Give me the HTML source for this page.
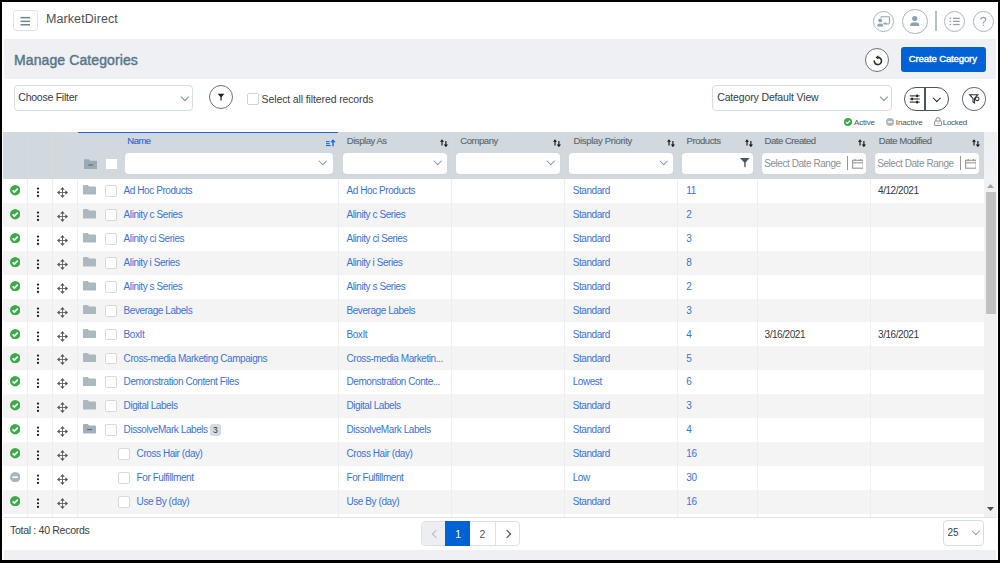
<!DOCTYPE html>
<html><head><meta charset="utf-8">
<style>
*{box-sizing:border-box;margin:0;padding:0}
html,body{width:1000px;height:563px;overflow:hidden;background:#000}
body{font-family:"Liberation Sans",sans-serif;position:relative}
.abs,.tx,.chev{position:absolute}
.tx{line-height:1;white-space:nowrap}
#frame{position:absolute;left:2px;top:2px;width:995.5px;height:557.5px;background:#fff;overflow:hidden}
#pg{position:absolute;left:-2px;top:-2px;width:1000px;height:563px}
.chev{border-style:solid}
.nicon{position:absolute;border:1.25px solid #a6b6bf;border-radius:50%;background:#fff}
.circ{position:absolute;border:1.3px solid #68737a;border-radius:50%;background:#fff}
.sel{position:absolute;border:1px solid #d5dee4;border-radius:4px;background:#fff}
.cbx{position:absolute;width:12px;height:12px;border:1px solid #cdd3d7;border-radius:2px;background:#fff}
.hsep{position:absolute;top:131.5px;width:1px;height:47.5px;background:#d7dadb}
.hin{position:absolute;top:153px;height:20.8px;background:#fff;border-radius:4px}
#tbody{position:absolute;left:3px;top:179px;width:981px;height:338px;background:#fff;overflow:hidden}
.row{position:absolute;left:0;width:981px;height:23.9px;background:#fff}
.row.alt{background:#f4f4f4}
.row > *{position:absolute}
.st{left:6.8px;top:6.3px}
.keb{left:32.8px;top:8.2px}
.mv{left:54.35px;top:8.2px}
.fd{left:80px;top:6.4px}
.cb{top:6.3px;width:11.8px;height:11.8px;border:1px solid #d7dadd;border-radius:2px;background:#fff}
.badge{top:5.8px;width:10.2px;height:12px;background:#d3dbe0;color:#333;border-radius:2.5px;font-size:8.5px;line-height:13.4px;text-align:center}
.vline{position:absolute;top:179px;width:1px;height:338px;background:#ebeef3}
</style></head><body>
<div id="frame"><div id="pg">
<!-- NAV -->
<div class="abs" style="left:13px;top:10px;width:24.5px;height:21px;border:1.1px solid #dde3e8;border-radius:3.5px;background:#fff"></div>
<svg class="abs" style="left:13px;top:10px" width="25" height="21" viewBox="0 0 25 21"><g fill="#6d8595"><rect x="7.5" y="6.9" width="9.5" height="1.5"/><rect x="7.5" y="10.6" width="9.5" height="1.5"/><rect x="7.5" y="14" width="9.5" height="1.5"/></g></svg>
<div class="tx" style="left:46px;top:13.42px;font-size:12.5px;color:#4a5056;letter-spacing:0.08px;font-weight:400;">MarketDirect</div>

<div class="nicon" style="left:873.3px;top:11.2px;width:20.8px;height:20.8px"></div>
<div class="nicon" style="left:902px;top:8.7px;width:25.6px;height:25.6px"></div>
<div class="abs" style="left:935.4px;top:11.2px;width:1.2px;height:20.3px;background:#b3c1c9"></div>
<div class="nicon" style="left:944px;top:11.2px;width:20.8px;height:20.8px"></div>
<div class="nicon" style="left:973.2px;top:11.2px;width:20.8px;height:20.8px"></div>
<svg class="abs" style="left:873.3px;top:11.2px" width="21" height="21" viewBox="0 0 21 21">
 <rect x="7.9" y="5.75" width="8.6" height="7.2" rx="0.9" fill="none" stroke="#8ea2af" stroke-width="1.15"/>
 <path d="M10.2 13.1 L12.4 10.9 L14.4 13.1Z" fill="#8ea2af"/>
 <circle cx="7.2" cy="9.4" r="2.9" fill="#fff"/>
 <path d="M3.6 16.6 V14 Q3.6 11.8 7.2 11.8 Q10.8 11.8 10.8 14 V16.6Z" fill="#fff"/>
 <circle cx="7.2" cy="9.4" r="1.85" fill="#8ea2af"/>
 <path d="M4.2 15.4 V14.4 Q4.2 12.4 7.2 12.4 Q10.2 12.4 10.2 14.4 V15.4Z" fill="#8ea2af"/>
</svg>
<svg class="abs" style="left:902px;top:8.7px" width="25.6" height="25.6" viewBox="0 0 25.6 25.6">
 <circle cx="12.7" cy="9.6" r="2.6" fill="#8ea2af"/>
 <path d="M8.2 17.1 V15.8 Q8.2 13.2 12.7 13.2 Q17.2 13.2 17.2 15.8 V17.1Z" fill="#8ea2af"/>
</svg>
<svg class="abs" style="left:944px;top:11.2px" width="21" height="21" viewBox="0 0 21 21">
 <g fill="#8ea2af"><rect x="5.6" y="6.6" width="1.5" height="1.5"/><rect x="5.6" y="9.6" width="1.5" height="1.5"/><rect x="5.6" y="12.8" width="1.5" height="1.5"/>
 <rect x="8.9" y="6.7" width="6.8" height="1.3"/><rect x="8.9" y="9.7" width="6.8" height="1.3"/><rect x="8.9" y="12.9" width="6.8" height="1.3"/></g>
</svg>
<svg class="abs" style="left:973.2px;top:11.2px" width="21" height="21" viewBox="0 0 21 21">
 <path d="M7.9 8.6 Q7.9 6.4 10.3 6.4 Q12.7 6.4 12.7 8.5 Q12.7 9.8 11.3 10.6 Q10.3 11.2 10.3 12.6" fill="none" stroke="#8ea2af" stroke-width="1.15"/>
 <circle cx="10.3" cy="14.3" r="0.8" fill="#8ea2af"/>
</svg>

<!-- TITLE BAR -->
<div class="abs" style="left:4px;top:39px;width:992px;height:40px;background:#eef0f4"></div>
<div class="tx" style="left:14px;top:53.05px;font-size:14px;color:#587789;letter-spacing:0.1px;font-weight:400;-webkit-text-stroke:0.45px #587789">Manage Categories</div>
<div class="circ" style="left:864.5px;top:47.5px;width:24px;height:24px"></div>
<svg class="abs" style="left:864.5px;top:47.5px" width="24" height="24" viewBox="0 0 24 24">
 <path d="M12.9 9.4 A3.6 3.6 0 1 1 9.355 12.375" fill="none" stroke="#2c2c2c" stroke-width="1.6"/>
 <path d="M10.5 9.4 L13.3 7.3 L13.3 11.5Z" fill="#2c2c2c"/>
</svg>
<div class="abs" style="left:901px;top:47px;width:85px;height:25.3px;background:#0062d4;border-radius:3px"></div>
<div class="tx" style="left:908.8px;top:54.37px;font-size:9.6px;color:#fff;letter-spacing:-0.16px;font-weight:400;-webkit-text-stroke:0.35px #fff">Create Category</div>

<!-- FILTER ROW -->
<div class="sel" style="left:14px;top:85px;width:179px;height:25.5px"></div>
<div class="tx" style="left:18.3px;top:92.41px;font-size:10.5px;color:#353a3f;letter-spacing:-0.25px;font-weight:400;">Choose Filter</div>
<div class="chev" style="left:181.5px;top:94px;width:5.8px;height:5.8px;border-color:#7891a3;border-width:0 1.15px 1.15px 0;transform:rotate(45deg)"></div>
<div class="circ" style="left:208.5px;top:85px;width:24.2px;height:24.2px"></div>
<svg class="abs" style="left:208.5px;top:85px" width="24" height="24" viewBox="0 0 24 24"><path d="M8.7 8.8 H15.4 L12.65 11.9 V15.6 H11.45 V11.9Z" fill="#1e1e1e"/></svg>
<div class="cbx" style="left:247px;top:93.2px"></div>
<div class="tx" style="left:261.6px;top:93.71px;font-size:10.5px;color:#3b4045;letter-spacing:-0.12px;font-weight:400;">Select all filtered records</div>

<div class="sel" style="left:712px;top:85px;width:180px;height:25.5px"></div>
<div class="tx" style="left:717.2px;top:92.31px;font-size:10.5px;color:#353a3f;letter-spacing:-0.14px;font-weight:400;">Category Default View</div>
<div class="chev" style="left:880.5px;top:94px;width:5.8px;height:5.8px;border-color:#7891a3;border-width:0 1.15px 1.15px 0;transform:rotate(45deg)"></div>
<div class="abs" style="left:904px;top:86.8px;width:45px;height:24px;border:1.2px solid #4a565d;border-radius:12px;background:#fff"></div>
<div class="abs" style="left:924.3px;top:87px;width:1.6px;height:23.6px;background:#4a565d"></div>
<svg class="abs" style="left:904px;top:86.8px" width="21" height="24" viewBox="0 0 21 24">
 <g stroke="#1e1e1e" stroke-width="1"><path d="M5.8 8.9 H15.7 M5.8 12 H15.7 M5.8 15.1 H15.7"/></g>
 <g fill="#1e1e1e"><rect x="12.2" y="7.6" width="1.8" height="2.6"/><rect x="7.2" y="10.7" width="1.8" height="2.6"/><rect x="12.2" y="13.8" width="1.8" height="2.6"/></g>
</svg>
<div class="chev" style="left:934.2px;top:94.6px;width:5.6px;height:5.6px;border-color:#1e1e1e;border-width:0 1.3px 1.3px 0;transform:rotate(45deg)"></div>
<div class="circ" style="left:961.5px;top:86.8px;width:24.2px;height:24px"></div>
<svg class="abs" style="left:961.5px;top:86.8px" width="24" height="24" viewBox="0 0 24 24"><path d="M7.7 7.7 H15.8 L12.5 11.5 V16 L11 15 V11.5Z" fill="none" stroke="#25343b" stroke-width="1.1"/><circle cx="15.2" cy="11.8" r="1.8" fill="#fff" stroke="#25343b" stroke-width="1.1"/></svg>

<!-- LEGEND -->
<svg class="abs" style="left:844px;top:118px" width="8" height="8" viewBox="0 0 10 10"><circle cx="5" cy="5" r="5" fill="#3cac4a"/><path d="M2.5 5.2 L4.2 6.8 L7.5 3.5" stroke="#fff" stroke-width="1.6" fill="none"/></svg>
<div class="tx" style="left:854.1px;top:118.63px;font-size:8px;color:#4d5358;letter-spacing:-0.2px;font-weight:400;">Active</div>
<svg class="abs" style="left:886.3px;top:118px" width="8" height="8" viewBox="0 0 10 10"><circle cx="5" cy="5" r="5" fill="#a9b6be"/><rect x="2.2" y="4.1" width="5.6" height="1.8" fill="#fff"/></svg>
<div class="tx" style="left:895.8px;top:118.63px;font-size:8px;color:#4d5358;letter-spacing:-0.1px;font-weight:400;">Inactive</div>
<svg class="abs" style="left:933.7px;top:117.3px" width="8" height="9" viewBox="0 0 8 9"><rect x="0.6" y="4" width="6.8" height="4.5" rx="0.5" fill="none" stroke="#7d848a" stroke-width="0.9"/><path d="M1.9 4 V2.7 A2.1 2.1 0 0 1 6.1 2.7 V4" fill="none" stroke="#7d848a" stroke-width="0.9"/><rect x="3.6" y="5.5" width="0.8" height="1.6" fill="#7d848a"/></svg>
<div class="tx" style="left:942.8px;top:118.63px;font-size:8px;color:#4d5358;letter-spacing:-0.3px;font-weight:400;">Locked</div>

<!-- TABLE HEADER -->
<div class="abs" style="left:3px;top:131.5px;width:981px;height:47.5px;background:#d1d9de"></div>
<div class="abs" style="left:78px;top:131.5px;width:261px;height:1.8px;background:#1f66d6"></div>
<div class="hsep" style="left:27px"></div><div class="hsep" style="left:52px"></div><div class="hsep" style="left:77px"></div><div class="hsep" style="left:338px"></div><div class="hsep" style="left:451px"></div><div class="hsep" style="left:564px"></div><div class="hsep" style="left:677px"></div><div class="hsep" style="left:757px"></div><div class="hsep" style="left:870px"></div>
<svg class="abs" style="left:84px;top:158.6px" width="13.4" height="10.4" viewBox="0 0 13 9.6"><path d="M0 1 Q0 0 1 0 H4.8 L6.1 1.4 H12 Q13 1.4 13 2.4 V8.8 Q13 9.6 12.2 9.6 H0.8 Q0 9.6 0 8.8Z" fill="#9cabb3"/><rect x="4" y="5" width="5" height="1.2" fill="#627580"/></svg>
<div class="abs" style="left:106px;top:158.5px;width:10.5px;height:10.5px;background:#fff"></div>
<div class="tx" style="left:127.3px;top:136.16px;font-size:9.5px;color:#2e67d3;letter-spacing:-0.5px;font-weight:400;-webkit-text-stroke:0.15px #2e67d3">Name</div>
<svg class="abs" style="left:325.5px;top:139px" width="10" height="8" viewBox="0 0 10 8"><g fill="#1f66d6"><rect x="0" y="2.1" width="3.6" height="1.1"/><rect x="0" y="4.1" width="3.6" height="1.1"/><rect x="0" y="6" width="4.6" height="1.1"/><path d="M7 0.3 L9.7 3.3 H7.7 V7.2 H6.3 V3.3 H4.3Z"/></g></svg>
<div class="hin" style="left:125px;width:208.3px"></div><div class="chev" style="left:320.3px;top:157.6px;width:5.5px;height:5.5px;border-color:#7891a3;border-width:0 1.1px 1.1px 0;transform:rotate(45deg)"></div>
<div class="tx" style="left:346.8px;top:136.16px;font-size:9.5px;color:#5d6971;letter-spacing:-0.45px;font-weight:400;-webkit-text-stroke:0.15px #5d6971">Display As</div>
<div class="hin" style="left:342.5px;width:104.6px"></div><div class="chev" style="left:434.5px;top:157.6px;width:5.5px;height:5.5px;border-color:#7891a3;border-width:0 1.1px 1.1px 0;transform:rotate(45deg)"></div>
<div class="tx" style="left:460.3px;top:136.16px;font-size:9.5px;color:#5d6971;letter-spacing:-0.45px;font-weight:400;-webkit-text-stroke:0.15px #5d6971">Company</div>
<div class="hin" style="left:456px;width:104px"></div><div class="chev" style="left:547.5px;top:157.6px;width:5.5px;height:5.5px;border-color:#7891a3;border-width:0 1.1px 1.1px 0;transform:rotate(45deg)"></div>
<div class="tx" style="left:573.4px;top:136.16px;font-size:9.5px;color:#5d6971;letter-spacing:-0.3px;font-weight:400;-webkit-text-stroke:0.15px #5d6971">Display Priority</div>
<div class="hin" style="left:569px;width:104.4px"></div><div class="chev" style="left:661px;top:157.6px;width:5.5px;height:5.5px;border-color:#7891a3;border-width:0 1.1px 1.1px 0;transform:rotate(45deg)"></div>
<div class="tx" style="left:686.6px;top:136.16px;font-size:9.5px;color:#5d6971;letter-spacing:-0.45px;font-weight:400;-webkit-text-stroke:0.15px #5d6971">Products</div>
<div class="hin" style="left:682px;width:71px"></div>
<svg class="abs" style="left:740px;top:157.9px" width="9.6" height="9.8" viewBox="0 0 9.6 9.8"><path d="M0 0 H9.6 L5.6 4.6 V9.8 L4.2 8.6 V4.6Z" fill="#465861"/></svg>
<div class="tx" style="left:764.5px;top:136.16px;font-size:9.5px;color:#5d6971;letter-spacing:-0.45px;font-weight:400;-webkit-text-stroke:0.15px #5d6971">Date Created</div>
<div class="tx" style="left:878.8px;top:136.16px;font-size:9.5px;color:#5d6971;letter-spacing:-0.45px;font-weight:400;-webkit-text-stroke:0.15px #5d6971">Date Modified</div>
<div class="hin" style="left:762px;width:104.4px"></div><div class="tx" style="left:764.2px;top:158.94px;font-size:10px;color:#8c9196;letter-spacing:-0.44px;font-weight:400;">Select Date Range</div><div class="abs" style="left:846.9px;top:156.3px;width:1.1px;height:14px;background:#929699"></div><svg class="abs" style="left:851.6px;top:159px" width="11.8" height="9.8" viewBox="0 0 11.8 9.8"><rect x="0.6" y="1.3" width="10.6" height="7.9" fill="none" stroke="#9a9a98" stroke-width="1.15"/><path d="M0.6 3.8 H11.2" stroke="#9a9a98" stroke-width="1.1"/><rect x="2.6" y="0" width="1.2" height="2.2" fill="#9a9a98"/><rect x="8" y="0" width="1.2" height="2.2" fill="#9a9a98"/></svg><div class="hin" style="left:875px;width:104.4px"></div><div class="tx" style="left:877.2px;top:158.94px;font-size:10px;color:#8c9196;letter-spacing:-0.44px;font-weight:400;">Select Date Range</div><div class="abs" style="left:959.9px;top:156.3px;width:1.1px;height:14px;background:#929699"></div><svg class="abs" style="left:964.6px;top:159px" width="11.8" height="9.8" viewBox="0 0 11.8 9.8"><rect x="0.6" y="1.3" width="10.6" height="7.9" fill="none" stroke="#9a9a98" stroke-width="1.15"/><path d="M0.6 3.8 H11.2" stroke="#9a9a98" stroke-width="1.1"/><rect x="2.6" y="0" width="1.2" height="2.2" fill="#9a9a98"/><rect x="8" y="0" width="1.2" height="2.2" fill="#9a9a98"/></svg><svg class="abs" style="left:439.8px;top:138.5px" width="8.2" height="8.4" viewBox="0 0 8.2 8.4"><path d="M0 2.8 L2.0 0.2 L4.0 2.8Z M3.8 5.6 L5.9 8.2 L8.0 5.6Z" fill="#161616"/><path d="M2.0 2 V6.4 M5.9 1.9 V6.2" stroke="#161616" stroke-width="1.15"/></svg><svg class="abs" style="left:553.3px;top:138.5px" width="8.2" height="8.4" viewBox="0 0 8.2 8.4"><path d="M0 2.8 L2.0 0.2 L4.0 2.8Z M3.8 5.6 L5.9 8.2 L8.0 5.6Z" fill="#161616"/><path d="M2.0 2 V6.4 M5.9 1.9 V6.2" stroke="#161616" stroke-width="1.15"/></svg><svg class="abs" style="left:666.8px;top:138.5px" width="8.2" height="8.4" viewBox="0 0 8.2 8.4"><path d="M0 2.8 L2.0 0.2 L4.0 2.8Z M3.8 5.6 L5.9 8.2 L8.0 5.6Z" fill="#161616"/><path d="M2.0 2 V6.4 M5.9 1.9 V6.2" stroke="#161616" stroke-width="1.15"/></svg><svg class="abs" style="left:745.3px;top:138.5px" width="8.2" height="8.4" viewBox="0 0 8.2 8.4"><path d="M0 2.8 L2.0 0.2 L4.0 2.8Z M3.8 5.6 L5.9 8.2 L8.0 5.6Z" fill="#161616"/><path d="M2.0 2 V6.4 M5.9 1.9 V6.2" stroke="#161616" stroke-width="1.15"/></svg><svg class="abs" style="left:858.2px;top:138.5px" width="8.2" height="8.4" viewBox="0 0 8.2 8.4"><path d="M0 2.8 L2.0 0.2 L4.0 2.8Z M3.8 5.6 L5.9 8.2 L8.0 5.6Z" fill="#161616"/><path d="M2.0 2 V6.4 M5.9 1.9 V6.2" stroke="#161616" stroke-width="1.15"/></svg><svg class="abs" style="left:972px;top:138.5px" width="8.2" height="8.4" viewBox="0 0 8.2 8.4"><path d="M0 2.8 L2.0 0.2 L4.0 2.8Z M3.8 5.6 L5.9 8.2 L8.0 5.6Z" fill="#161616"/><path d="M2.0 2 V6.4 M5.9 1.9 V6.2" stroke="#161616" stroke-width="1.15"/></svg>
<div id="tbody">
<div class="row" style="top:0.00px"><svg class="st" width="10.4" height="10.4" viewBox="0 0 10 10"><circle cx="5" cy="5" r="5" fill="#3cac4a"/><path d="M2.5 5.2 L4.2 6.8 L7.5 3.5" stroke="#fff" stroke-width="1.5" fill="none"/></svg><svg class="keb" width="4" height="11" viewBox="0 0 4 11"><circle cx="2" cy="1.6" r="1.12" fill="#1a1a1a"/><circle cx="2" cy="5.25" r="1.12" fill="#1a1a1a"/><circle cx="2" cy="8.9" r="1.12" fill="#1a1a1a"/></svg><svg class="mv" width="11" height="11" viewBox="0 0 11 11"><path d="M5.5 2 V9 M2 5.5 H9" stroke="#6e6e6e" stroke-width="1"/><path d="M5.5 0 L3.3 2.7 H7.7Z M5.5 11 L3.3 8.3 H7.7Z M0 5.5 L2.7 3.3 V7.7Z M11 5.5 L8.3 3.3 V7.7Z" fill="#555"/></svg><svg class="fd" width="13" height="9.6" viewBox="0 0 13 9.6"><path d="M0 1 Q0 0 1 0 H4.8 L6.1 1.4 H12 Q13 1.4 13 2.4 V8.8 Q13 9.6 12.2 9.6 H0.8 Q0 9.6 0 8.8Z" fill="#abb8c0"/></svg><div class="cb" style="left:102px"></div><div class="tx" style="left:120.6px;top:7.23px;font-size:10px;color:#3a73da;letter-spacing:-0.43px;font-weight:400;">Ad Hoc Products</div><div class="tx" style="left:343.5px;top:7.23px;font-size:10px;color:#3a73da;letter-spacing:-0.43px;font-weight:400;">Ad Hoc Products</div><div class="tx" style="left:569.7px;top:7.23px;font-size:10px;color:#3a73da;letter-spacing:-0.43px;font-weight:400;">Standard</div><div class="tx" style="left:683.3px;top:7.23px;font-size:10px;color:#3a73da;letter-spacing:-0.43px;font-weight:400;">11</div><div class="tx" style="left:875px;top:7.23px;font-size:10px;color:#363b40;letter-spacing:-0.43px;font-weight:400;">4/12/2021</div></div>
<div class="row alt" style="top:23.90px"><svg class="st" width="10.4" height="10.4" viewBox="0 0 10 10"><circle cx="5" cy="5" r="5" fill="#3cac4a"/><path d="M2.5 5.2 L4.2 6.8 L7.5 3.5" stroke="#fff" stroke-width="1.5" fill="none"/></svg><svg class="keb" width="4" height="11" viewBox="0 0 4 11"><circle cx="2" cy="1.6" r="1.12" fill="#1a1a1a"/><circle cx="2" cy="5.25" r="1.12" fill="#1a1a1a"/><circle cx="2" cy="8.9" r="1.12" fill="#1a1a1a"/></svg><svg class="mv" width="11" height="11" viewBox="0 0 11 11"><path d="M5.5 2 V9 M2 5.5 H9" stroke="#6e6e6e" stroke-width="1"/><path d="M5.5 0 L3.3 2.7 H7.7Z M5.5 11 L3.3 8.3 H7.7Z M0 5.5 L2.7 3.3 V7.7Z M11 5.5 L8.3 3.3 V7.7Z" fill="#555"/></svg><svg class="fd" width="13" height="9.6" viewBox="0 0 13 9.6"><path d="M0 1 Q0 0 1 0 H4.8 L6.1 1.4 H12 Q13 1.4 13 2.4 V8.8 Q13 9.6 12.2 9.6 H0.8 Q0 9.6 0 8.8Z" fill="#abb8c0"/></svg><div class="cb" style="left:102px"></div><div class="tx" style="left:120.6px;top:7.23px;font-size:10px;color:#3a73da;letter-spacing:-0.43px;font-weight:400;">Alinity c Series</div><div class="tx" style="left:343.5px;top:7.23px;font-size:10px;color:#3a73da;letter-spacing:-0.43px;font-weight:400;">Alinity c Series</div><div class="tx" style="left:569.7px;top:7.23px;font-size:10px;color:#3a73da;letter-spacing:-0.43px;font-weight:400;">Standard</div><div class="tx" style="left:683.3px;top:7.23px;font-size:10px;color:#3a73da;letter-spacing:-0.43px;font-weight:400;">2</div></div>
<div class="row" style="top:47.80px"><svg class="st" width="10.4" height="10.4" viewBox="0 0 10 10"><circle cx="5" cy="5" r="5" fill="#3cac4a"/><path d="M2.5 5.2 L4.2 6.8 L7.5 3.5" stroke="#fff" stroke-width="1.5" fill="none"/></svg><svg class="keb" width="4" height="11" viewBox="0 0 4 11"><circle cx="2" cy="1.6" r="1.12" fill="#1a1a1a"/><circle cx="2" cy="5.25" r="1.12" fill="#1a1a1a"/><circle cx="2" cy="8.9" r="1.12" fill="#1a1a1a"/></svg><svg class="mv" width="11" height="11" viewBox="0 0 11 11"><path d="M5.5 2 V9 M2 5.5 H9" stroke="#6e6e6e" stroke-width="1"/><path d="M5.5 0 L3.3 2.7 H7.7Z M5.5 11 L3.3 8.3 H7.7Z M0 5.5 L2.7 3.3 V7.7Z M11 5.5 L8.3 3.3 V7.7Z" fill="#555"/></svg><svg class="fd" width="13" height="9.6" viewBox="0 0 13 9.6"><path d="M0 1 Q0 0 1 0 H4.8 L6.1 1.4 H12 Q13 1.4 13 2.4 V8.8 Q13 9.6 12.2 9.6 H0.8 Q0 9.6 0 8.8Z" fill="#abb8c0"/></svg><div class="cb" style="left:102px"></div><div class="tx" style="left:120.6px;top:7.23px;font-size:10px;color:#3a73da;letter-spacing:-0.43px;font-weight:400;">Alinity ci Series</div><div class="tx" style="left:343.5px;top:7.23px;font-size:10px;color:#3a73da;letter-spacing:-0.43px;font-weight:400;">Alinity ci Series</div><div class="tx" style="left:569.7px;top:7.23px;font-size:10px;color:#3a73da;letter-spacing:-0.43px;font-weight:400;">Standard</div><div class="tx" style="left:683.3px;top:7.23px;font-size:10px;color:#3a73da;letter-spacing:-0.43px;font-weight:400;">3</div></div>
<div class="row alt" style="top:71.70px"><svg class="st" width="10.4" height="10.4" viewBox="0 0 10 10"><circle cx="5" cy="5" r="5" fill="#3cac4a"/><path d="M2.5 5.2 L4.2 6.8 L7.5 3.5" stroke="#fff" stroke-width="1.5" fill="none"/></svg><svg class="keb" width="4" height="11" viewBox="0 0 4 11"><circle cx="2" cy="1.6" r="1.12" fill="#1a1a1a"/><circle cx="2" cy="5.25" r="1.12" fill="#1a1a1a"/><circle cx="2" cy="8.9" r="1.12" fill="#1a1a1a"/></svg><svg class="mv" width="11" height="11" viewBox="0 0 11 11"><path d="M5.5 2 V9 M2 5.5 H9" stroke="#6e6e6e" stroke-width="1"/><path d="M5.5 0 L3.3 2.7 H7.7Z M5.5 11 L3.3 8.3 H7.7Z M0 5.5 L2.7 3.3 V7.7Z M11 5.5 L8.3 3.3 V7.7Z" fill="#555"/></svg><svg class="fd" width="13" height="9.6" viewBox="0 0 13 9.6"><path d="M0 1 Q0 0 1 0 H4.8 L6.1 1.4 H12 Q13 1.4 13 2.4 V8.8 Q13 9.6 12.2 9.6 H0.8 Q0 9.6 0 8.8Z" fill="#abb8c0"/></svg><div class="cb" style="left:102px"></div><div class="tx" style="left:120.6px;top:7.23px;font-size:10px;color:#3a73da;letter-spacing:-0.43px;font-weight:400;">Alinity i Series</div><div class="tx" style="left:343.5px;top:7.23px;font-size:10px;color:#3a73da;letter-spacing:-0.43px;font-weight:400;">Alinity i Series</div><div class="tx" style="left:569.7px;top:7.23px;font-size:10px;color:#3a73da;letter-spacing:-0.43px;font-weight:400;">Standard</div><div class="tx" style="left:683.3px;top:7.23px;font-size:10px;color:#3a73da;letter-spacing:-0.43px;font-weight:400;">8</div></div>
<div class="row" style="top:95.60px"><svg class="st" width="10.4" height="10.4" viewBox="0 0 10 10"><circle cx="5" cy="5" r="5" fill="#3cac4a"/><path d="M2.5 5.2 L4.2 6.8 L7.5 3.5" stroke="#fff" stroke-width="1.5" fill="none"/></svg><svg class="keb" width="4" height="11" viewBox="0 0 4 11"><circle cx="2" cy="1.6" r="1.12" fill="#1a1a1a"/><circle cx="2" cy="5.25" r="1.12" fill="#1a1a1a"/><circle cx="2" cy="8.9" r="1.12" fill="#1a1a1a"/></svg><svg class="mv" width="11" height="11" viewBox="0 0 11 11"><path d="M5.5 2 V9 M2 5.5 H9" stroke="#6e6e6e" stroke-width="1"/><path d="M5.5 0 L3.3 2.7 H7.7Z M5.5 11 L3.3 8.3 H7.7Z M0 5.5 L2.7 3.3 V7.7Z M11 5.5 L8.3 3.3 V7.7Z" fill="#555"/></svg><svg class="fd" width="13" height="9.6" viewBox="0 0 13 9.6"><path d="M0 1 Q0 0 1 0 H4.8 L6.1 1.4 H12 Q13 1.4 13 2.4 V8.8 Q13 9.6 12.2 9.6 H0.8 Q0 9.6 0 8.8Z" fill="#abb8c0"/></svg><div class="cb" style="left:102px"></div><div class="tx" style="left:120.6px;top:7.23px;font-size:10px;color:#3a73da;letter-spacing:-0.43px;font-weight:400;">Alinity s Series</div><div class="tx" style="left:343.5px;top:7.23px;font-size:10px;color:#3a73da;letter-spacing:-0.43px;font-weight:400;">Alinity s Series</div><div class="tx" style="left:569.7px;top:7.23px;font-size:10px;color:#3a73da;letter-spacing:-0.43px;font-weight:400;">Standard</div><div class="tx" style="left:683.3px;top:7.23px;font-size:10px;color:#3a73da;letter-spacing:-0.43px;font-weight:400;">2</div></div>
<div class="row alt" style="top:119.50px"><svg class="st" width="10.4" height="10.4" viewBox="0 0 10 10"><circle cx="5" cy="5" r="5" fill="#3cac4a"/><path d="M2.5 5.2 L4.2 6.8 L7.5 3.5" stroke="#fff" stroke-width="1.5" fill="none"/></svg><svg class="keb" width="4" height="11" viewBox="0 0 4 11"><circle cx="2" cy="1.6" r="1.12" fill="#1a1a1a"/><circle cx="2" cy="5.25" r="1.12" fill="#1a1a1a"/><circle cx="2" cy="8.9" r="1.12" fill="#1a1a1a"/></svg><svg class="mv" width="11" height="11" viewBox="0 0 11 11"><path d="M5.5 2 V9 M2 5.5 H9" stroke="#6e6e6e" stroke-width="1"/><path d="M5.5 0 L3.3 2.7 H7.7Z M5.5 11 L3.3 8.3 H7.7Z M0 5.5 L2.7 3.3 V7.7Z M11 5.5 L8.3 3.3 V7.7Z" fill="#555"/></svg><svg class="fd" width="13" height="9.6" viewBox="0 0 13 9.6"><path d="M0 1 Q0 0 1 0 H4.8 L6.1 1.4 H12 Q13 1.4 13 2.4 V8.8 Q13 9.6 12.2 9.6 H0.8 Q0 9.6 0 8.8Z" fill="#abb8c0"/></svg><div class="cb" style="left:102px"></div><div class="tx" style="left:120.6px;top:7.23px;font-size:10px;color:#3a73da;letter-spacing:-0.43px;font-weight:400;">Beverage Labels</div><div class="tx" style="left:343.5px;top:7.23px;font-size:10px;color:#3a73da;letter-spacing:-0.43px;font-weight:400;">Beverage Labels</div><div class="tx" style="left:569.7px;top:7.23px;font-size:10px;color:#3a73da;letter-spacing:-0.43px;font-weight:400;">Standard</div><div class="tx" style="left:683.3px;top:7.23px;font-size:10px;color:#3a73da;letter-spacing:-0.43px;font-weight:400;">3</div></div>
<div class="row" style="top:143.40px"><svg class="st" width="10.4" height="10.4" viewBox="0 0 10 10"><circle cx="5" cy="5" r="5" fill="#3cac4a"/><path d="M2.5 5.2 L4.2 6.8 L7.5 3.5" stroke="#fff" stroke-width="1.5" fill="none"/></svg><svg class="keb" width="4" height="11" viewBox="0 0 4 11"><circle cx="2" cy="1.6" r="1.12" fill="#1a1a1a"/><circle cx="2" cy="5.25" r="1.12" fill="#1a1a1a"/><circle cx="2" cy="8.9" r="1.12" fill="#1a1a1a"/></svg><svg class="mv" width="11" height="11" viewBox="0 0 11 11"><path d="M5.5 2 V9 M2 5.5 H9" stroke="#6e6e6e" stroke-width="1"/><path d="M5.5 0 L3.3 2.7 H7.7Z M5.5 11 L3.3 8.3 H7.7Z M0 5.5 L2.7 3.3 V7.7Z M11 5.5 L8.3 3.3 V7.7Z" fill="#555"/></svg><svg class="fd" width="13" height="9.6" viewBox="0 0 13 9.6"><path d="M0 1 Q0 0 1 0 H4.8 L6.1 1.4 H12 Q13 1.4 13 2.4 V8.8 Q13 9.6 12.2 9.6 H0.8 Q0 9.6 0 8.8Z" fill="#abb8c0"/></svg><div class="cb" style="left:102px"></div><div class="tx" style="left:120.6px;top:7.23px;font-size:10px;color:#3a73da;letter-spacing:-0.43px;font-weight:400;">BoxIt</div><div class="tx" style="left:343.5px;top:7.23px;font-size:10px;color:#3a73da;letter-spacing:-0.43px;font-weight:400;">BoxIt</div><div class="tx" style="left:569.7px;top:7.23px;font-size:10px;color:#3a73da;letter-spacing:-0.43px;font-weight:400;">Standard</div><div class="tx" style="left:683.3px;top:7.23px;font-size:10px;color:#3a73da;letter-spacing:-0.43px;font-weight:400;">4</div><div class="tx" style="left:761.5px;top:7.23px;font-size:10px;color:#363b40;letter-spacing:-0.43px;font-weight:400;">3/16/2021</div><div class="tx" style="left:875px;top:7.23px;font-size:10px;color:#363b40;letter-spacing:-0.43px;font-weight:400;">3/16/2021</div></div>
<div class="row alt" style="top:167.30px"><svg class="st" width="10.4" height="10.4" viewBox="0 0 10 10"><circle cx="5" cy="5" r="5" fill="#3cac4a"/><path d="M2.5 5.2 L4.2 6.8 L7.5 3.5" stroke="#fff" stroke-width="1.5" fill="none"/></svg><svg class="keb" width="4" height="11" viewBox="0 0 4 11"><circle cx="2" cy="1.6" r="1.12" fill="#1a1a1a"/><circle cx="2" cy="5.25" r="1.12" fill="#1a1a1a"/><circle cx="2" cy="8.9" r="1.12" fill="#1a1a1a"/></svg><svg class="mv" width="11" height="11" viewBox="0 0 11 11"><path d="M5.5 2 V9 M2 5.5 H9" stroke="#6e6e6e" stroke-width="1"/><path d="M5.5 0 L3.3 2.7 H7.7Z M5.5 11 L3.3 8.3 H7.7Z M0 5.5 L2.7 3.3 V7.7Z M11 5.5 L8.3 3.3 V7.7Z" fill="#555"/></svg><svg class="fd" width="13" height="9.6" viewBox="0 0 13 9.6"><path d="M0 1 Q0 0 1 0 H4.8 L6.1 1.4 H12 Q13 1.4 13 2.4 V8.8 Q13 9.6 12.2 9.6 H0.8 Q0 9.6 0 8.8Z" fill="#abb8c0"/></svg><div class="cb" style="left:102px"></div><div class="tx" style="left:120.6px;top:7.23px;font-size:10px;color:#3a73da;letter-spacing:-0.43px;font-weight:400;">Cross-media Marketing Campaigns</div><div class="tx" style="left:343.5px;top:7.23px;font-size:10px;color:#3a73da;letter-spacing:-0.43px;font-weight:400;">Cross-media Marketin...</div><div class="tx" style="left:569.7px;top:7.23px;font-size:10px;color:#3a73da;letter-spacing:-0.43px;font-weight:400;">Standard</div><div class="tx" style="left:683.3px;top:7.23px;font-size:10px;color:#3a73da;letter-spacing:-0.43px;font-weight:400;">5</div></div>
<div class="row" style="top:191.20px"><svg class="st" width="10.4" height="10.4" viewBox="0 0 10 10"><circle cx="5" cy="5" r="5" fill="#3cac4a"/><path d="M2.5 5.2 L4.2 6.8 L7.5 3.5" stroke="#fff" stroke-width="1.5" fill="none"/></svg><svg class="keb" width="4" height="11" viewBox="0 0 4 11"><circle cx="2" cy="1.6" r="1.12" fill="#1a1a1a"/><circle cx="2" cy="5.25" r="1.12" fill="#1a1a1a"/><circle cx="2" cy="8.9" r="1.12" fill="#1a1a1a"/></svg><svg class="mv" width="11" height="11" viewBox="0 0 11 11"><path d="M5.5 2 V9 M2 5.5 H9" stroke="#6e6e6e" stroke-width="1"/><path d="M5.5 0 L3.3 2.7 H7.7Z M5.5 11 L3.3 8.3 H7.7Z M0 5.5 L2.7 3.3 V7.7Z M11 5.5 L8.3 3.3 V7.7Z" fill="#555"/></svg><svg class="fd" width="13" height="9.6" viewBox="0 0 13 9.6"><path d="M0 1 Q0 0 1 0 H4.8 L6.1 1.4 H12 Q13 1.4 13 2.4 V8.8 Q13 9.6 12.2 9.6 H0.8 Q0 9.6 0 8.8Z" fill="#abb8c0"/></svg><div class="cb" style="left:102px"></div><div class="tx" style="left:120.6px;top:7.23px;font-size:10px;color:#3a73da;letter-spacing:-0.43px;font-weight:400;">Demonstration Content Files</div><div class="tx" style="left:343.5px;top:7.23px;font-size:10px;color:#3a73da;letter-spacing:-0.43px;font-weight:400;">Demonstration Conte...</div><div class="tx" style="left:569.7px;top:7.23px;font-size:10px;color:#3a73da;letter-spacing:-0.43px;font-weight:400;">Lowest</div><div class="tx" style="left:683.3px;top:7.23px;font-size:10px;color:#3a73da;letter-spacing:-0.43px;font-weight:400;">6</div></div>
<div class="row alt" style="top:215.10px"><svg class="st" width="10.4" height="10.4" viewBox="0 0 10 10"><circle cx="5" cy="5" r="5" fill="#3cac4a"/><path d="M2.5 5.2 L4.2 6.8 L7.5 3.5" stroke="#fff" stroke-width="1.5" fill="none"/></svg><svg class="keb" width="4" height="11" viewBox="0 0 4 11"><circle cx="2" cy="1.6" r="1.12" fill="#1a1a1a"/><circle cx="2" cy="5.25" r="1.12" fill="#1a1a1a"/><circle cx="2" cy="8.9" r="1.12" fill="#1a1a1a"/></svg><svg class="mv" width="11" height="11" viewBox="0 0 11 11"><path d="M5.5 2 V9 M2 5.5 H9" stroke="#6e6e6e" stroke-width="1"/><path d="M5.5 0 L3.3 2.7 H7.7Z M5.5 11 L3.3 8.3 H7.7Z M0 5.5 L2.7 3.3 V7.7Z M11 5.5 L8.3 3.3 V7.7Z" fill="#555"/></svg><svg class="fd" width="13" height="9.6" viewBox="0 0 13 9.6"><path d="M0 1 Q0 0 1 0 H4.8 L6.1 1.4 H12 Q13 1.4 13 2.4 V8.8 Q13 9.6 12.2 9.6 H0.8 Q0 9.6 0 8.8Z" fill="#abb8c0"/></svg><div class="cb" style="left:102px"></div><div class="tx" style="left:120.6px;top:7.23px;font-size:10px;color:#3a73da;letter-spacing:-0.43px;font-weight:400;">Digital Labels</div><div class="tx" style="left:343.5px;top:7.23px;font-size:10px;color:#3a73da;letter-spacing:-0.43px;font-weight:400;">Digital Labels</div><div class="tx" style="left:569.7px;top:7.23px;font-size:10px;color:#3a73da;letter-spacing:-0.43px;font-weight:400;">Standard</div><div class="tx" style="left:683.3px;top:7.23px;font-size:10px;color:#3a73da;letter-spacing:-0.43px;font-weight:400;">3</div></div>
<div class="row" style="top:239.00px"><svg class="st" width="10.4" height="10.4" viewBox="0 0 10 10"><circle cx="5" cy="5" r="5" fill="#3cac4a"/><path d="M2.5 5.2 L4.2 6.8 L7.5 3.5" stroke="#fff" stroke-width="1.5" fill="none"/></svg><svg class="keb" width="4" height="11" viewBox="0 0 4 11"><circle cx="2" cy="1.6" r="1.12" fill="#1a1a1a"/><circle cx="2" cy="5.25" r="1.12" fill="#1a1a1a"/><circle cx="2" cy="8.9" r="1.12" fill="#1a1a1a"/></svg><svg class="mv" width="11" height="11" viewBox="0 0 11 11"><path d="M5.5 2 V9 M2 5.5 H9" stroke="#6e6e6e" stroke-width="1"/><path d="M5.5 0 L3.3 2.7 H7.7Z M5.5 11 L3.3 8.3 H7.7Z M0 5.5 L2.7 3.3 V7.7Z M11 5.5 L8.3 3.3 V7.7Z" fill="#555"/></svg><svg class="fd" width="13" height="9.6" viewBox="0 0 13 9.6"><path d="M0 1 Q0 0 1 0 H4.8 L6.1 1.4 H12 Q13 1.4 13 2.4 V8.8 Q13 9.6 12.2 9.6 H0.8 Q0 9.6 0 8.8Z" fill="#a3b0b8"/><rect x="4" y="5" width="5" height="1.2" fill="#5f707a"/></svg><div class="cb" style="left:102px"></div><div class="tx" style="left:120.6px;top:7.23px;font-size:10px;color:#3a73da;letter-spacing:-0.43px;font-weight:400;">DissolveMark Labels</div><div class="badge" style="left:207.4px">3</div><div class="tx" style="left:343.5px;top:7.23px;font-size:10px;color:#3a73da;letter-spacing:-0.43px;font-weight:400;">DissolveMark Labels</div><div class="tx" style="left:569.7px;top:7.23px;font-size:10px;color:#3a73da;letter-spacing:-0.43px;font-weight:400;">Standard</div><div class="tx" style="left:683.3px;top:7.23px;font-size:10px;color:#3a73da;letter-spacing:-0.43px;font-weight:400;">4</div></div>
<div class="row alt" style="top:262.90px"><svg class="st" width="10.4" height="10.4" viewBox="0 0 10 10"><circle cx="5" cy="5" r="5" fill="#3cac4a"/><path d="M2.5 5.2 L4.2 6.8 L7.5 3.5" stroke="#fff" stroke-width="1.5" fill="none"/></svg><svg class="keb" width="4" height="11" viewBox="0 0 4 11"><circle cx="2" cy="1.6" r="1.12" fill="#1a1a1a"/><circle cx="2" cy="5.25" r="1.12" fill="#1a1a1a"/><circle cx="2" cy="8.9" r="1.12" fill="#1a1a1a"/></svg><svg class="mv" width="11" height="11" viewBox="0 0 11 11"><path d="M5.5 2 V9 M2 5.5 H9" stroke="#6e6e6e" stroke-width="1"/><path d="M5.5 0 L3.3 2.7 H7.7Z M5.5 11 L3.3 8.3 H7.7Z M0 5.5 L2.7 3.3 V7.7Z M11 5.5 L8.3 3.3 V7.7Z" fill="#555"/></svg><div class="cb" style="left:115.3px"></div><div class="tx" style="left:133.6px;top:7.23px;font-size:10px;color:#3a73da;letter-spacing:-0.43px;font-weight:400;">Cross Hair (day)</div><div class="tx" style="left:343.5px;top:7.23px;font-size:10px;color:#3a73da;letter-spacing:-0.43px;font-weight:400;">Cross Hair (day)</div><div class="tx" style="left:569.7px;top:7.23px;font-size:10px;color:#3a73da;letter-spacing:-0.43px;font-weight:400;">Standard</div><div class="tx" style="left:683.3px;top:7.23px;font-size:10px;color:#3a73da;letter-spacing:-0.43px;font-weight:400;">16</div></div>
<div class="row" style="top:286.80px"><svg class="st" width="10.4" height="10.4" viewBox="0 0 10 10"><circle cx="5" cy="5" r="5" fill="#a9b6be"/><rect x="2.4" y="4.25" width="5.2" height="1.5" fill="#fff"/></svg><svg class="keb" width="4" height="11" viewBox="0 0 4 11"><circle cx="2" cy="1.6" r="1.12" fill="#1a1a1a"/><circle cx="2" cy="5.25" r="1.12" fill="#1a1a1a"/><circle cx="2" cy="8.9" r="1.12" fill="#1a1a1a"/></svg><svg class="mv" width="11" height="11" viewBox="0 0 11 11"><path d="M5.5 2 V9 M2 5.5 H9" stroke="#6e6e6e" stroke-width="1"/><path d="M5.5 0 L3.3 2.7 H7.7Z M5.5 11 L3.3 8.3 H7.7Z M0 5.5 L2.7 3.3 V7.7Z M11 5.5 L8.3 3.3 V7.7Z" fill="#555"/></svg><div class="cb" style="left:115.3px"></div><div class="tx" style="left:133.6px;top:7.23px;font-size:10px;color:#3a73da;letter-spacing:-0.43px;font-weight:400;">For Fulfillment</div><div class="tx" style="left:343.5px;top:7.23px;font-size:10px;color:#3a73da;letter-spacing:-0.43px;font-weight:400;">For Fulfillment</div><div class="tx" style="left:569.7px;top:7.23px;font-size:10px;color:#3a73da;letter-spacing:-0.43px;font-weight:400;">Low</div><div class="tx" style="left:683.3px;top:7.23px;font-size:10px;color:#3a73da;letter-spacing:-0.43px;font-weight:400;">30</div></div>
<div class="row alt" style="top:310.70px"><svg class="st" width="10.4" height="10.4" viewBox="0 0 10 10"><circle cx="5" cy="5" r="5" fill="#3cac4a"/><path d="M2.5 5.2 L4.2 6.8 L7.5 3.5" stroke="#fff" stroke-width="1.5" fill="none"/></svg><svg class="keb" width="4" height="11" viewBox="0 0 4 11"><circle cx="2" cy="1.6" r="1.12" fill="#1a1a1a"/><circle cx="2" cy="5.25" r="1.12" fill="#1a1a1a"/><circle cx="2" cy="8.9" r="1.12" fill="#1a1a1a"/></svg><svg class="mv" width="11" height="11" viewBox="0 0 11 11"><path d="M5.5 2 V9 M2 5.5 H9" stroke="#6e6e6e" stroke-width="1"/><path d="M5.5 0 L3.3 2.7 H7.7Z M5.5 11 L3.3 8.3 H7.7Z M0 5.5 L2.7 3.3 V7.7Z M11 5.5 L8.3 3.3 V7.7Z" fill="#555"/></svg><div class="cb" style="left:115.3px"></div><div class="tx" style="left:133.6px;top:7.23px;font-size:10px;color:#3a73da;letter-spacing:-0.43px;font-weight:400;">Use By (day)</div><div class="tx" style="left:343.5px;top:7.23px;font-size:10px;color:#3a73da;letter-spacing:-0.43px;font-weight:400;">Use By (day)</div><div class="tx" style="left:569.7px;top:7.23px;font-size:10px;color:#3a73da;letter-spacing:-0.43px;font-weight:400;">Standard</div><div class="tx" style="left:683.3px;top:7.23px;font-size:10px;color:#3a73da;letter-spacing:-0.43px;font-weight:400;">16</div></div>
</div>
<div class="vline" style="left:27px"></div><div class="vline" style="left:52px"></div><div class="vline" style="left:77px"></div><div class="vline" style="left:338px"></div><div class="vline" style="left:451px"></div><div class="vline" style="left:564px"></div><div class="vline" style="left:677px"></div><div class="vline" style="left:757px"></div><div class="vline" style="left:870px"></div>
<div class="abs" style="left:984px;top:131.5px;width:12.5px;height:47.5px;background:linear-gradient(#eceef1,#f2f3f5)"></div>
<div class="abs" style="left:984px;top:179px;width:12.5px;height:338px;background:#f1f1f1"></div>
<div class="abs" style="left:986px;top:192.3px;width:10px;height:121.7px;background:#c1c1c1"></div>
<svg class="abs" style="left:986.5px;top:183.5px" width="7" height="4" viewBox="0 0 7 4"><path d="M0 4 L3.5 0 L7 4Z" fill="#a3a3a3"/></svg>
<svg class="abs" style="left:987px;top:506.8px" width="7" height="4" viewBox="0 0 7 4"><path d="M0 0 L3.5 4 L7 0Z" fill="#505050"/></svg>
<div class="abs" style="left:4px;top:516.6px;width:992px;height:1.4px;background:#dde1e5"></div>
<div class="abs" style="left:4px;top:518px;width:992px;height:32.2px;background:#fff"></div>
<div class="tx" style="left:10px;top:525.23px;font-size:10.6px;color:#3a3f44;letter-spacing:-0.33px;font-weight:400;">Total : 40 Records</div>
<div class="abs" style="left:421.2px;top:521px;width:98.6px;height:25px;border:1px solid #dce1e5;border-radius:4px;background:#fff;overflow:hidden">
  <div class="abs" style="left:0;top:0;width:23.2px;height:23px;background:#eceef2"></div>
  <div class="abs" style="left:72.8px;top:0;width:1.2px;height:23px;background:#dde2e6"></div>
</div>
<div class="abs" style="left:445.3px;top:521px;width:24.7px;height:25px;background:#0062d4"></div>
<div class="tx" style="left:455.2px;top:529.60px;font-size:10.4px;color:#fff;letter-spacing:0px;font-weight:400;">1</div>
<div class="tx" style="left:479.4px;top:529.60px;font-size:10.4px;color:#555;letter-spacing:0px;font-weight:400;">2</div>
<div class="chev" style="left:433.3px;top:531.0px;width:6px;height:6px;border-color:#b5babd;border-width:0 1.35px 1.35px 0;transform:rotate(135deg)"></div>
<div class="chev" style="left:503.8px;top:531.0px;width:6px;height:6px;border-color:#3a4853;border-width:0 1.5px 1.5px 0;transform:rotate(-45deg)"></div>
<div class="sel" style="left:943px;top:520px;width:40.5px;height:25.5px"></div>
<div class="tx" style="left:947.5px;top:528.33px;font-size:10px;color:#3a3f44;letter-spacing:0px;font-weight:400;">25</div>
<div class="chev" style="left:973.0px;top:527.6px;width:5.6px;height:5.6px;border-color:#8a9dab;border-width:0 1.15px 1.15px 0;transform:rotate(45deg)"></div>
<div class="abs" style="left:4px;top:550.2px;width:992px;height:9.5px;background:#eef0f4"></div>
</div></div>
</body></html>
